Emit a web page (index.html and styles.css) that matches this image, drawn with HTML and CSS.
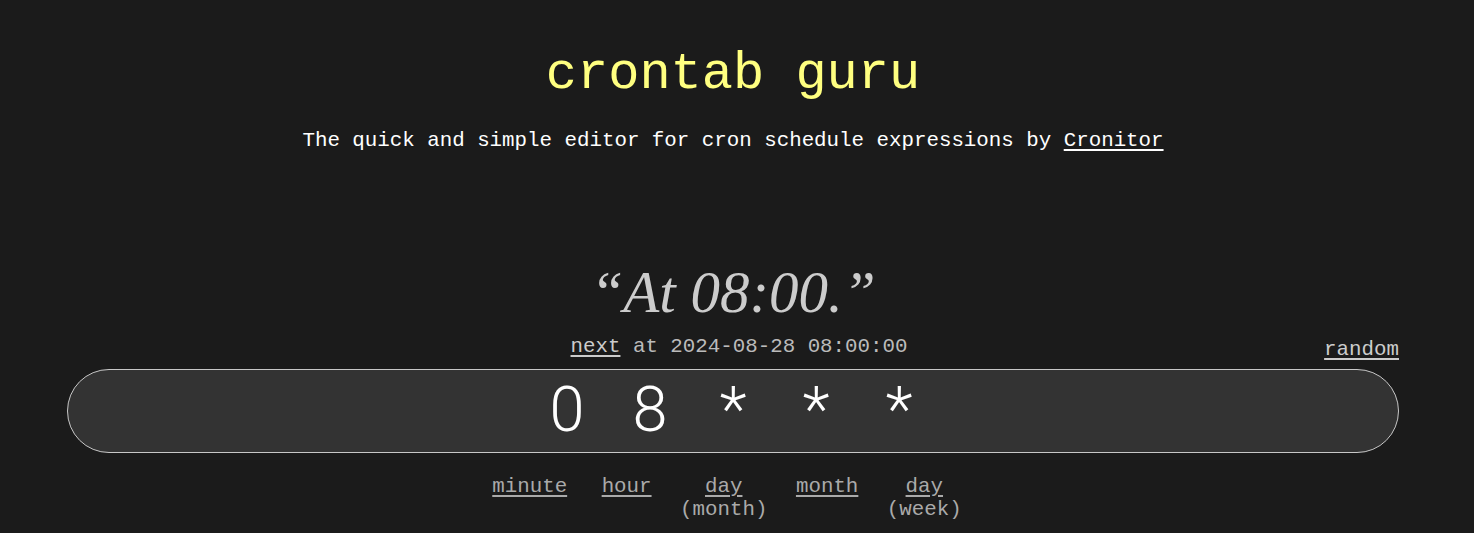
FILE: index.html
```html
<!DOCTYPE html>
<html lang="en">
<head>
<meta charset="utf-8">
<title>crontab guru</title>
<link rel="stylesheet" href="styles.css">
</head>
<body>
<div class="page">
  <header class="header">
    <h1 class="title">crontab guru</h1>
    <p class="subtitle">The quick and simple editor for cron schedule expressions by <a class="link-white" href="#">Cronitor</a></p>
  </header>
  <main class="editor">
    <div class="human">“At 08:00.”</div>
    <div class="next-row">
      <div class="spacer"></div>
      <div class="next"><a class="link" href="#">next</a> at 2024-08-28 08:00:00</div>
      <div class="random-cell"><a class="link" href="#">random</a></div>
    </div>
    <div class="cron-input">
      <span class="ch">0</span><span class="ch"> </span><span class="ch">8</span><span class="ch"> </span><span class="ch">*</span><span class="ch"> </span><span class="ch">*</span><span class="ch"> </span><span class="ch">*</span>
    </div>
    <div class="parts">
      <div class="part part-minute"><a class="plink" href="#">minute</a></div>
      <div class="part"><a class="plink" href="#">hour</a></div>
      <div class="part"><a class="plink" href="#">day</a><span class="sub">(month)</span></div>
      <div class="part"><a class="plink" href="#">month</a></div>
      <div class="part"><a class="plink" href="#">day</a><span class="sub">(week)</span></div>
    </div>
  </main>
</div>
</body>
</html>
```

FILE: styles.css
```css
html, body {
  margin: 0;
  padding: 0;
  background: #1b1b1b;
}
body {
  font-family: "Liberation Mono", "Courier New", monospace;
  color: #ffffff;
}
.page {
  width: 1332px;
  margin-left: 67px;
  padding-top: 45px;
}
.header {
  text-align: center;
}
.title {
  margin: 0;
  font-weight: normal;
  font-size: 52px;
  line-height: 60px;
  color: #ffff80;
}
.subtitle {
  margin: 22.5px 0 0;
  font-size: 20.8px;
  line-height: 26px;
  color: #ffffff;
}
.link-white {
  color: #ffffff;
  text-decoration: underline;
  text-decoration-thickness: 2px;
  text-underline-offset: 3px;
}
.editor {
  margin-top: 103.5px;
}
.human {
  font-family: "Liberation Serif", Georgia, serif;
  font-style: italic;
  font-size: 59px;
  line-height: 70px;
  text-align: center;
  color: #cccccc;
}
.next-row {
  margin-top: 6.5px;
  display: grid;
  grid-template-columns: 1fr auto 1fr;
  height: 26px;
  font-size: 20.8px;
  line-height: 26px;
  color: #bbbbbb;
}
.next {
  padding-left: 12px;
  white-space: pre;
}
.random-cell {
  justify-self: end;
  padding-top: 3px;
  margin-bottom: -3px;
}
.link {
  color: #cccccc;
  text-decoration: underline;
  text-decoration-thickness: 2px;
  text-underline-offset: 3px;
}
.cron-input {
  margin-top: 9.5px;
  box-sizing: border-box;
  height: 84px;
  border: 1px solid #c8c8c8;
  border-radius: 42px;
  background: #333333;
  display: flex;
  align-items: center;
  justify-content: center;
  padding-bottom: 3px;
  font-family: Roboto, "Noto Sans", sans-serif;
  font-weight: 300;
  font-size: 63px;
  color: #ffffff;
}
.ch {
  display: inline-block;
  width: 41.5px;
  text-align: center;
  white-space: pre;
}
.parts {
  margin-top: 22px;
  display: flex;
  justify-content: center;
  gap: 28.5px;
  padding-right: 12px;
  font-size: 20.8px;
  line-height: 23px;
  color: #aaaaaa;
}
.part {
  display: flex;
  flex-direction: column;
  align-items: center;
}
.part-minute {
  margin-right: 6px;
}
.plink {
  color: #aaaaaa;
  text-decoration: underline;
  text-decoration-thickness: 2px;
  text-underline-offset: 3px;
}
.sub {
  color: #aaaaaa;
}
```
